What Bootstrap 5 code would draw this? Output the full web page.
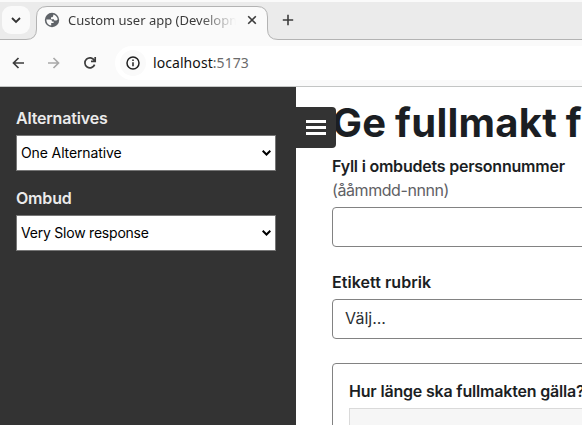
<!DOCTYPE html>
<html lang="sv">
<head>
<meta charset="utf-8">
<meta name="viewport" content="width=device-width, initial-scale=1">
<title>Custom user app (Development)</title>
<link href="https://cdn.jsdelivr.net/npm/bootstrap@5.3.0/dist/css/bootstrap.min.css" rel="stylesheet">
<style>
body{height:425px;font-family:Inter,"Liberation Sans",sans-serif;font-size:16px;line-height:24px;color:#1b1e23;background:#fff}
svg{display:block;flex-shrink:0}
.chrome{font-family:"Noto Sans",sans-serif;height:87px;background:#fafafa;border-bottom:1px solid #c3c5c4}
.tabstrip{height:40px;background:#ebebeb;border-top:2px solid #fafafa}
.tabshape{left:0;top:0}
.tabsearch{width:28px;height:28px;margin:4px 0 0 2px;border-radius:9px;background:#fafafa}
.globe{margin:10px 0 0 14px}
.tabtitle{width:168px;margin:8px 0 0 8px;font-size:13px;line-height:20px;color:#3c3c3c;-webkit-mask-image:linear-gradient(90deg,#000 132px,transparent 168px);mask-image:linear-gradient(90deg,#000 132px,transparent 168px)}
.tabclose{margin:13px 0 0 11px}
.newtab{margin:12px 0 0 25px}
.tools{height:46px}
.back{margin-left:12px}
.forward{margin-left:24px}
.reload{margin-left:23px}
.omni{height:34px;margin-left:18px;background:#fff;border-radius:17px 0 0 17px;font-size:14px;color:#111}
.info{width:26px;height:26px;margin-left:5px;border-radius:13px;background:#fafafa}
.url{margin-left:7px;letter-spacing:.07px}
.port{color:#6b6b6b}
.side{width:296px;flex-shrink:0;background:#333;padding:19px 20px 0 16px}
.side label{display:block;color:#ebebeb;font-weight:600;line-height:24px;margin-bottom:5px;letter-spacing:-.18px}
.picker{width:260px;height:36px;border:1px solid #767676;background:#fff;color:#000;font-size:14px;padding:0 4px;margin-bottom:15px}
.t-one{letter-spacing:-.12px}
.t-slow{letter-spacing:-.22px}
.burger{left:296px;top:20px;width:40px;height:41px;background:#333;border:0;border-radius:0 4px 4px 0;padding:13px 10px;z-index:2}
.content-pane{padding:12px 0 0 36px;width:286px}
.title{font-size:40px;line-height:48px;font-weight:700;margin:0 0 7px;letter-spacing:.25px;word-spacing:-1px}
.lbl{font-weight:600;height:24px}
.t-fyll{letter-spacing:-.22px}
.t-etik{letter-spacing:.05px;margin-top:23px}
.t-hur{letter-spacing:-.18px}
.hint{color:#5f6165;height:24px;letter-spacing:-.42px;margin-bottom:5px}
.field{height:40px;width:420px;border:1px solid #828282;border-radius:4px;background:#fff}
.t-valj{margin-top:5px;padding:0 12px 2px;color:#2c2f33}
.group{width:420px;height:150px;margin-top:24px;border:1px solid #828282;border-radius:4px;padding:15px 16px}
.inner{height:80px;margin-top:5px;border:1px solid #dadada;background:#f6f6f6}
</style>
<script src="https://cdn.jsdelivr.net/npm/bootstrap@5.3.0/dist/js/bootstrap.bundle.min.js"></script>
</head>
<body class="overflow-hidden d-flex flex-column">
<header class="chrome flex-shrink-0">
  <div class="tabstrip position-relative">
    <svg class="tabshape position-absolute" width="582" height="38"><path d="M-1 37.5H26Q36.500 37.500 36.500 27V15Q36.500 4.500 47 4.500H257Q267.500 4.500 267.500 15V27Q267.500 37.500 278 37.500H583V39H-1Z" fill="#fafafa" stroke="#b3b3b3"/></svg>
    <div class="position-relative d-flex align-items-start">
      <div class="tabsearch d-flex align-items-center justify-content-center"><svg width="10" height="8" fill="none" stroke="#333" stroke-width="1.8"><path d="M1 2l4 4 4-4"/></svg></div>
      <svg class="globe" width="16" height="16"><circle cx="8" cy="8" r="7.200" fill="#5f6368"/><path d="M2.300 7.500H6.200Q8 7.700 8 9.600H9.600V11H7.200V13.600Q2.600 12.800 2.300 7.500ZM9.400 2.500Q13.200 3.800 13.700 7.600L12.400 8.600H10.700Q10 8.300 9.900 7.200H7V5.300H8.200Q9.300 5 9.400 2.500Z" fill="#fafafa"/></svg>
      <div class="tabtitle text-nowrap overflow-hidden">Custom user app (Development)</div>
      <svg class="tabclose" width="10" height="10" fill="none" stroke="#3c3c3c" stroke-width="1.600"><path d="M1.200 1.200l7.600 7.600M8.800 1.200L1.200 8.800"/></svg>
      <svg class="newtab" width="12" height="12" fill="none" stroke="#3c3c3c" stroke-width="1.600"><path d="M6 .8v10.400M.8 6h10.400"/></svg>
    </div>
  </div>
  <div class="tools d-flex align-items-center">
    <svg class="back" width="12" height="12" fill="none" stroke="#3c3c3c" stroke-width="1.700"><path d="M12 6H1.500M6.500 1L1.500 6l5 5"/></svg>
    <svg class="forward" width="12" height="12" fill="none" stroke="#a9a9a9" stroke-width="1.700"><path d="M0 6H10.500M5.500 1l5 5-5 5"/></svg>
    <svg class="reload" width="14" height="14" fill="none" stroke="#3c3c3c" stroke-width="1.700"><path d="M11.600 8.600A5 5 0 1 1 11.300 4.500"/><path d="M12.200 1V5.400H8"/><path d="M12 3v2.500H9.500z" fill="#3c3c3c" stroke="none"/></svg>
    <div class="omni flex-grow-1 d-flex align-items-center">
      <div class="info d-flex align-items-center justify-content-center"><svg width="14" height="14" fill="none" stroke="#202020" stroke-width="1.500"><circle cx="7" cy="7" r="6"/><path d="M7 6.200v4M7 3.600v1.500"/></svg></div>
      <div class="url">localhost<span class="port">:5173</span></div>
    </div>
  </div>
</header>
<div class="d-flex flex-grow-1 position-relative overflow-hidden">
  <aside class="side">
    <label>Alternatives</label>
    <div class="picker d-flex align-items-center justify-content-between"><span class="t-one">One Alternative</span><svg width="9" height="6" fill="none" stroke="#000" stroke-width="2"><path d="M.7 .7l3.800 3.800L8.300 .7"/></svg></div>
    <label>Ombud</label>
    <div class="picker d-flex align-items-center justify-content-between"><span class="t-slow">Very Slow response</span><svg width="9" height="6" fill="none" stroke="#000" stroke-width="2"><path d="M.7 .7l3.800 3.800L8.300 .7"/></svg></div>
  </aside>
  <button class="burger position-absolute d-flex flex-column" aria-label="Meny"><svg width="20" height="15" fill="#fff"><path d="M0 0h20v3H0zM0 6h20v3H0zM0 12h20v3H0z"/></svg></button>
  <main class="content-pane overflow-hidden text-nowrap">
    <h1 class="title">Ge fullmakt för</h1>
    <div class="lbl t-fyll">Fyll i ombudets personnummer</div>
    <div class="hint">(ååmmdd-nnnn)</div>
    <div class="field"></div>
    <div class="lbl t-etik">Etikett rubrik</div>
    <div class="field d-flex align-items-center t-valj">Välj...</div>
    <div class="group">
      <div class="lbl t-hur">Hur länge ska fullmakten gälla?</div>
      <div class="inner"></div>
    </div>
  </main>
</div>
</body>
</html>
